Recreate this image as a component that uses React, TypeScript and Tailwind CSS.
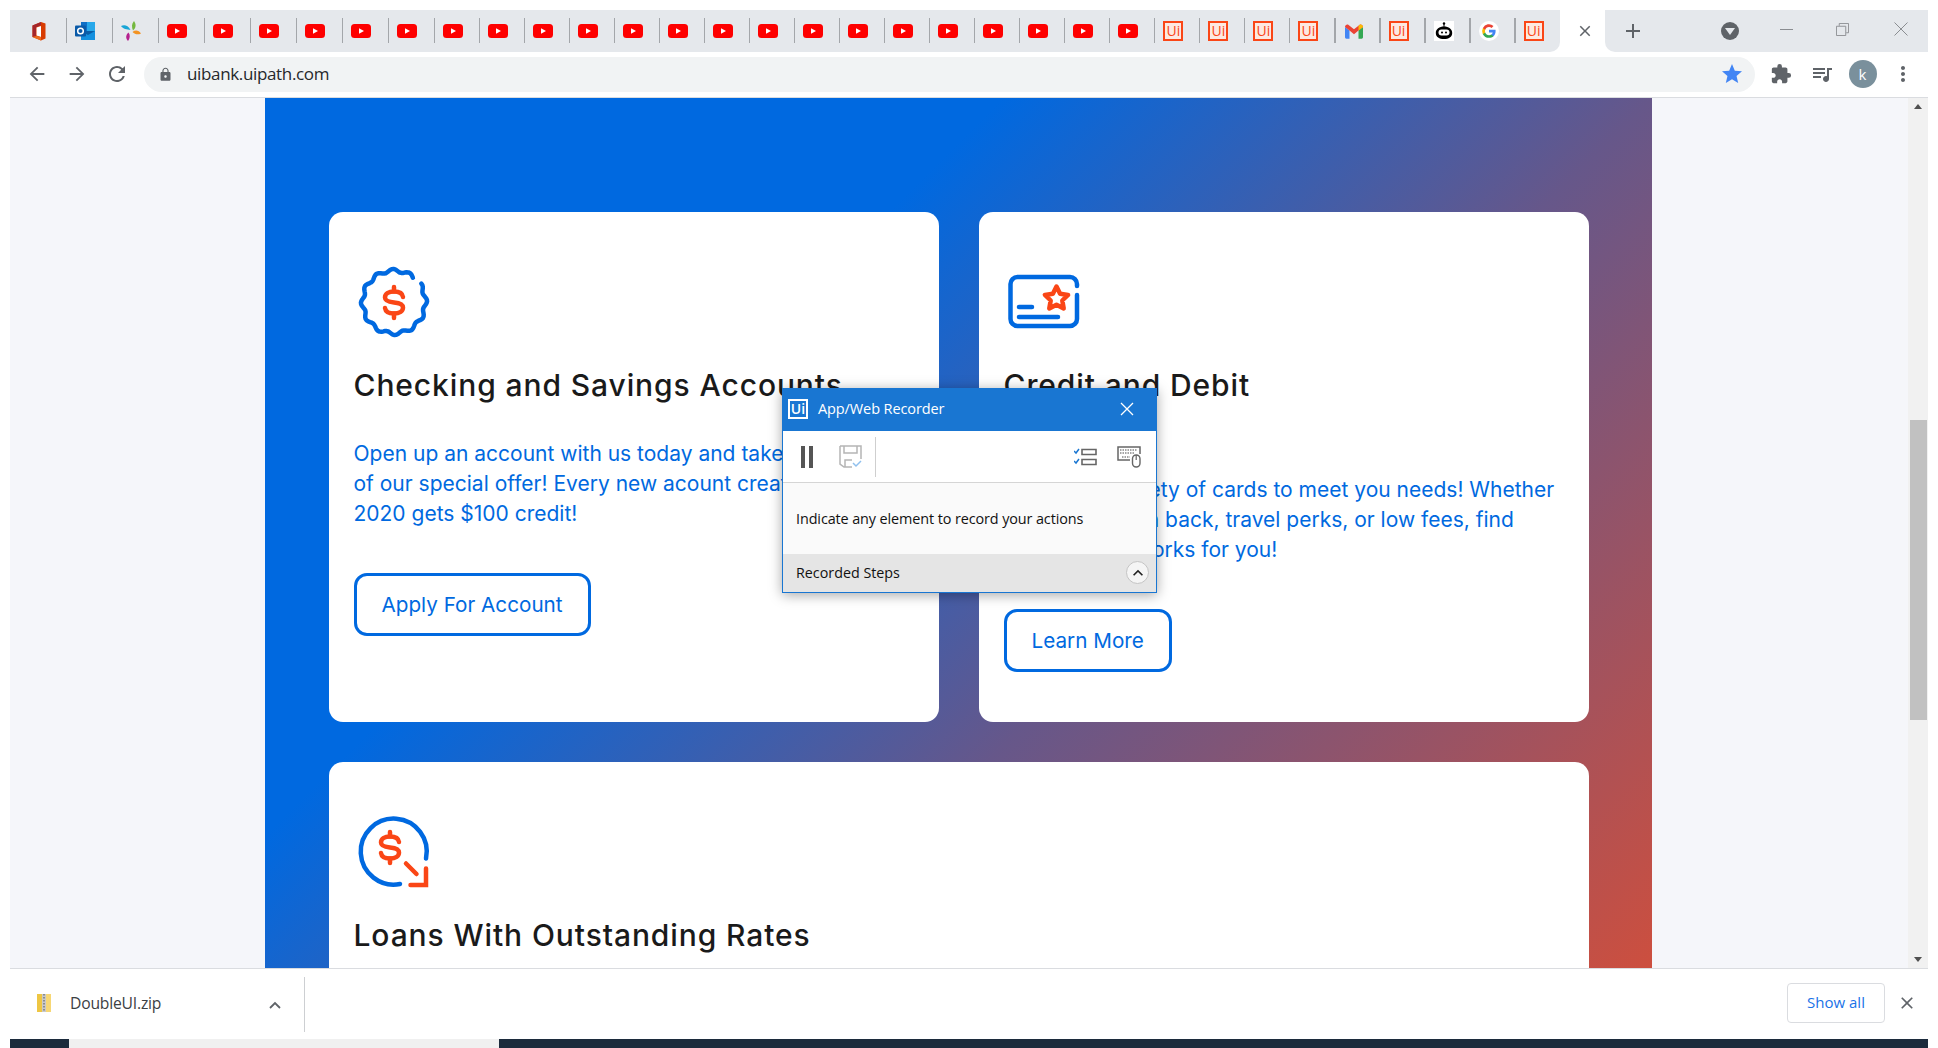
import React from "react";
import { MdArrowBack, MdArrowForward, MdRefresh, MdLock, MdStar, MdExtension, MdQueueMusic, MdMoreVert, MdClose, MdAdd, MdExpandLess } from "react-icons/md";

const BLUE = "#0069e0";
const OR = "#fa4616";

function Office() {
  return (
    <svg viewBox="0 0 20 20" className="w-5 h-5">
      <path d="M3.5 4.5 12 1l4.5 1.5v15L12 19.5 3.500 16V4.500Z" fill="#d83b01" />
      <path d="M3.500 4.500 12 1v3L7 6.500v8.500l-3.500 1z" fill="#a4262c" />
      <path d="M7.500 6.500 12 5v11l-4.500-1.500z" fill="#fff" />
      <path d="M12 16v3.500l-8.500-3.500L7.500 15z" fill="#eb6c1c" />
    </svg>
  );
}
function Outlook() {
  return (
    <svg viewBox="0 0 20 20" className="w-5 h-5">
      <rect x="6" y="1" width="14" height="9" fill="#0f6fc6" />
      <rect x="12" y="1" width="8" height="9" fill="#28a8ea" />
      <path d="M6 10h14v9H6z" fill="#0a5ea8" />
      <path d="M6 10l7 4 7-4v9H6z" fill="#1490df" />
      <rect x="0" y="4.500" width="11" height="11" rx="1" fill="#0a5aa8" />
      <circle cx="5.500" cy="10" r="2.800" fill="none" stroke="#fff" strokeWidth="1.500" />
    </svg>
  );
}
function Pin() {
  return (
    <svg viewBox="0 0 20 20" className="w-5 h-5">
      <path d="M0 5C3 3.500 7 4 9.500 9 6 8.500 2 8 0 5z" fill="#18a5d6" />
      <path d="M13 0c2 3 2.500 6.500-1 9.500C10.500 6 10.500 3 13 0z" fill="#74b83f" />
      <path d="M20 12.500c-3 1.500-6 1-8.500-1.500 3-2.500 6.500-1.500 8.500 1.500z" fill="#f39322" />
      <path d="M7 20C4.500 17.500 4.500 14 7.500 11.500c2 2.500 1.500 6-.5 8.500z" fill="#b5218e" />
    </svg>
  );
}
function Yt() {
  return (
    <svg viewBox="0 0 20 14" className="w-5 h-[14px]">
      <rect width="20" height="14" rx="3.500" fill="#fe0000" />
      <path d="M8 4.300 13 7l-5 2.700z" fill="#fff" />
    </svg>
  );
}
function Ui() {
  return (
    <div className="w-5 h-5 border-2 border-[#fa4616] bg-[#fde9e1] flex items-center justify-center text-[14px] leading-none text-[#fa4616] font-['Open_Sans',sans-serif]">
      Ui
    </div>
  );
}
function Gmail() {
  return (
    <svg viewBox="0 0 20 16" className="w-[18px] h-[15px]">
      <path d="M0 3v11.500C0 15.300.7 16 1.500 16H5V7z" fill="#4285f4" />
      <path d="M20 3v11.500c0 .8-.7 1.500-1.500 1.500H15V7z" fill="#34a853" />
      <path d="M0 3c0-2.500 2.500-3.500 4-2.300L10 5.500 16 .7C17.500-.5 20 .5 20 3l-5 4-5 4-5-4z" fill="#ea4335" />
      <path d="M15 7V2l1-1.300C17.500-.5 20 .5 20 3z" fill="#fbbc04" />
    </svg>
  );
}
function Robot() {
  return (
    <svg viewBox="0 0 20 20" className="w-5 h-5 bg-white">
      <circle cx="10" cy="2.500" r="1.200" fill="#000" />
      <rect x="9.500" y="3" width="1" height="3" fill="#000" />
      <path d="M1.800 12c0-4 3.600-6.500 8.200-6.500s8.200 2.500 8.200 6.500-3.600 6-8.200 6-8.200-2-8.200-6z" fill="#000" />
      <rect x="4.500" y="8.500" width="11" height="6" rx="3" fill="#fff" />
      <circle cx="8" cy="11.500" r="1" fill="#000" />
      <circle cx="12" cy="11.500" r="1" fill="#000" />
    </svg>
  );
}
function Google() {
  return (
    <svg viewBox="0 0 20 20" className="w-5 h-5">
      <circle cx="10" cy="10" r="10" fill="#fff" />
      <path d="M16.600 10.200c0-.5 0-.9-.1-1.400H10v2.600h3.700a3.200 3.200 0 0 1-1.400 2.100v1.700h2.200c1.300-1.200 2.100-2.900 2.100-5z" fill="#4285f4" />
      <path d="M10 16.800c1.800 0 3.400-.6 4.500-1.600l-2.200-1.700c-.6.400-1.400.7-2.300.7-1.800 0-3.300-1.200-3.800-2.800H3.900v1.800A6.800 6.800 0 0 0 10 16.800z" fill="#34a853" />
      <path d="M6.200 11.400a4 4 0 0 1 0-2.700V6.900H3.900a6.800 6.800 0 0 0 0 6.300z" fill="#fbbc05" />
      <path d="M10 5.900c1 0 1.900.3 2.600 1l1.900-1.900A6.800 6.800 0 0 0 3.900 6.900l2.300 1.800C6.700 7.100 8.200 5.900 10 5.900z" fill="#ea4335" />
    </svg>
  );
}

const tabs: React.ReactNode[] = [
  <Office />, <Outlook />, <Pin />,
  ...Array.from({ length: 22 }, () => <Yt />),
  <Ui />, <Ui />, <Ui />, <Ui />, <Gmail />, <Ui />, <Robot />, <Google />, <Ui />,
];

function Tab({ index, children }: { index: number; children: React.ReactNode }) {
  return (
    <div className={`${index < 9 ? "w-[46px]" : "w-[45.03px]"} h-full relative flex items-center pl-[9.500px] shrink-0`}>
      {index !== 0 && <div className="absolute left-0 top-[8px] bottom-[9px] w-[1.500px] bg-[#a3a6aa]" />}
      <div className="w-5 h-5 flex items-center justify-center">{children}</div>
    </div>
  );
}

function TabStrip() {
  return (
    <div className="h-[42px] flex shrink-0">
      <div className="w-[1550px] h-full bg-[#e5e8ec] rounded-br-[10px] flex pl-[9.700px] shrink-0">
        {tabs.map((t, i) => (
          <Tab key={i} index={i}>{t}</Tab>
        ))}
      </div>
      <div className="w-[45px] h-full bg-white rounded-t-[10px] flex items-center justify-center shrink-0">
        <MdClose className="w-[18px] h-[18px] text-[#5f6368] ml-[4px]" />
      </div>
      <div className="flex-1 h-full bg-[#e5e8ec] rounded-bl-[10px] flex items-center text-[#5f6368]">
        <MdAdd className="w-[24px] h-[24px] ml-[16px]" />
        <div className="w-[18px] h-[18px] rounded-full bg-[#5f6368] ml-[76px] flex items-center justify-center">
          <div className="w-0 h-0 border-l-[5px] border-r-[5px] border-t-[7px] border-l-transparent border-r-transparent border-t-[#e5e8ec] mt-[1px]" />
        </div>
        <div className="w-[13px] h-[1px] bg-[#8a8d91] ml-[41px] mb-[4px]" />
        <svg viewBox="0 0 14 14" className="w-[13px] h-[13px] ml-[43px] mb-[4px] text-[#8a8d91]">
          <path d="M3.500 3V.5h10v10H11M.5 3.500h10v10H.5z" fill="none" stroke="currentColor" />
        </svg>
        <svg viewBox="0 0 14 14" className="w-[14px] h-[14px] ml-[45px] mb-[4px]">
          <path d="M.5.5l13 13M13.500.5l-13 13" stroke="#8a8d91" strokeWidth="1" fill="none" />
        </svg>
      </div>
    </div>
  );
}

function Toolbar() {
  return (
    <div className="h-[46px] bg-white border-b border-[#dadce0] flex items-center shrink-0 text-[#5f6368] pb-[1px]">
      <MdArrowBack className="w-[22px] h-[22px] ml-[16px]" />
      <MdArrowForward className="w-[22px] h-[22px] ml-[18px]" />
      <MdRefresh className="w-[24px] h-[24px] ml-[17px]" />
      <div className="ml-[15px] w-[1611px] h-[35px] rounded-full bg-[#f1f3f4] flex items-center">
        <MdLock className="w-[15px] h-[15px] ml-[14px]" />
        <span className="ml-[14px] text-[17px] tracking-[-0.35px] text-[#25282b] font-['Open_Sans',sans-serif]">uibank.uipath.com</span>
        <MdStar className="w-[24px] h-[24px] ml-auto mr-[11px] text-[#4285f4]" />
      </div>
      <MdExtension className="w-[22px] h-[22px] ml-[15px]" />
      <MdQueueMusic className="w-[24px] h-[24px] ml-[17.500px]" />
      <div className="w-[28px] h-[28px] rounded-full bg-[#7a909c] text-white flex items-center justify-center text-[15px] ml-[15px] font-['Open_Sans',sans-serif]">k</div>
      <MdMoreVert className="w-[24px] h-[24px] ml-[14px]" />
    </div>
  );
}

function Dollar({ x, y }: { x: number; y: number }) {
  return (
    <g transform={`translate(${x} ${y})`} fill="none" stroke={OR} strokeWidth="4.500" strokeLinecap="round" strokeLinejoin="round">
      <path d="M9 -5.500C8.500 -9 5 -11 0 -11C-5.500 -11 -9 -8.500 -9 -5C-9 -1.500 -5 -.5 0 0C5 .5 9 1.500 9 5C9 8.500 5.500 11 0 11C-5 11 -8.500 9 -9 5.500" />
      <path d="M0 -11V-15.500M0 11V15.500" />
    </g>
  );
}

function badgePath() {
  const pts: string[] = [];
  for (let d = -34; d <= 309; d += 3) {
    const a = (d * Math.PI) / 180;
    const r = 31.5 + 1.600 * Math.cos(12 * a + 0.4);
    pts.push(`${(40 + r * Math.cos(a)).toFixed(2)} ${(40 + r * Math.sin(a)).toFixed(2)}`);
  }
  return "M" + pts.join("L");
}

function BadgeIcon() {
  return (
    <svg viewBox="0 0 80 80" className="w-20 h-20">
      <path d={badgePath()} fill="none" stroke={BLUE} strokeWidth="4.500" strokeLinecap="round" strokeLinejoin="round" />
      <Dollar x={40} y={40.500} />
    </svg>
  );
}
function CardIcon() {
  return (
    <svg viewBox="0 0 80 80" className="w-20 h-20">
      <path d="M73 33V57a7 7 0 0 1-7 7H13.500a7 7 0 0 1-7-7V22a7 7 0 0 1 7-7H66a7 7 0 0 1 7 7V24" fill="none" stroke={BLUE} strokeWidth="4.500" strokeLinecap="round" />
      <path d="M15 45H28M15 55H54" fill="none" stroke={BLUE} strokeWidth="4.500" strokeLinecap="round" />
      <path d="M52.500 24.500l3.600 7.300 8 1.100-5.800 5.600 1.400 8-7.200-3.800-7.200 3.800 1.400-8-5.800-5.600 8-1.100z" fill="none" stroke={OR} strokeWidth="4.500" strokeLinejoin="round" />
    </svg>
  );
}
function LoanIcon() {
  return (
    <svg viewBox="0 0 80 80" className="w-20 h-20">
      <path d="M72 46.500A33 33 0 1 0 46 72" fill="none" stroke={BLUE} strokeWidth="4.500" strokeLinecap="round" />
      <Dollar x={36} y={35.500} />
      <path d="M52 51.500 62.500 62M72 56.500V73H56.500" fill="none" stroke={OR} strokeWidth="4.500" strokeLinecap="round" />
    </svg>
  );
}

const titleCls = "text-[#1a1a1a] text-[30px] leading-[36px] tracking-[0.9px] font-medium font-['Inter',sans-serif] mt-[25px]";
const bodyCls = "text-[#0069e0] text-[21px] leading-[30px] font-['Inter',sans-serif] mt-[36px] whitespace-nowrap";
const btnCls = "h-[63px] px-[25px] border-[3px] border-[#0069e0] rounded-[13px] text-[#0069e0] text-[20.700px] font-['Inter',sans-serif] bg-white";

function Page() {
  return (
    <div className="ml-[255px] w-[1387px] pt-[114px] pl-[64px] pr-[63px] pb-[120px] bg-[linear-gradient(135deg,#0069e0_27.5%,#66578a_51.7%,#cc4f3f_84%,#e0582c_100%)]">
      <div className="grid grid-cols-2 gap-[40px]">
        <div className="bg-white rounded-[14px] h-[510px] pt-[50px] pl-[24.500px]">
          <BadgeIcon />
          <h2 className={titleCls}>Checking and Savings Accounts</h2>
          <p className={bodyCls}>Open up an account with us today and take advantage<br />of our special offer! Every new acount created in<br />2020 gets $100 credit!</p>
          <button className={`${btnCls} mt-[44px]`}>Apply For Account</button>
        </div>
        <div className="bg-white rounded-[14px] h-[510px] pt-[50px] pl-[24.500px]">
          <CardIcon />
          <h2 className={titleCls}>Credit and Debit<br />Cards</h2>
          <p className={bodyCls}>We offer a variety of cards to meet you needs! Whether<br />you prefer cash back, travel perks, or low fees, find<br />the card that works for you!</p>
          <button className={`${btnCls} mt-[44px]`}>Learn More</button>
        </div>
      </div>
      <div className="bg-white rounded-[14px] mt-[40px] h-[510px] pt-[50px] pl-[24.500px]">
        <LoanIcon />
        <h2 className={titleCls}>Loans With Outstanding Rates</h2>
      </div>
    </div>
  );
}

function Scrollbar() {
  return (
    <div className="w-[20px] h-full bg-[#f1f1f1] flex flex-col items-center shrink-0">
      <div className="h-[17px] w-full flex items-center justify-center">
        <div className="w-0 h-0 border-l-[4px] border-r-[4px] border-b-[5px] border-l-transparent border-r-transparent border-b-[#505050]" />
      </div>
      <div className="w-[17px] h-[300px] bg-[#c1c1c1] mt-[305px]" />
      <div className="flex-1" />
      <div className="h-[17px] w-full flex items-center justify-center">
        <div className="w-0 h-0 border-l-[4px] border-r-[4px] border-t-[5px] border-l-transparent border-r-transparent border-t-[#505050]" />
      </div>
    </div>
  );
}

function Recorder() {
  return (
    <div className="absolute left-[772px] top-[290px] w-[375px] h-[205px] border border-[#1976d2] bg-[#fafafa] shadow-[0_2px_12px_rgba(0,0,0,0.35)] flex flex-col font-['Open_Sans',sans-serif]">
      <div className="h-[42px] bg-[#1976d2] flex items-center text-white shrink-0 pb-[2px]">
        <div className="w-5 h-5 border-2 border-white ml-[5px] flex items-center justify-center text-[14px] leading-none font-semibold">Ui</div>
        <span className="ml-[10px] text-[14.500px] tracking-[-0.1px]">App/Web Recorder</span>
        <svg viewBox="0 0 14 14" className="w-[14px] h-[14px] ml-auto mr-[22px]">
          <path d="M1 1l12 12M13 1L1 13" stroke="#fff" strokeWidth="1.300" />
        </svg>
      </div>
      <div className="h-[52px] bg-white border-b border-[#d5d5d5] flex items-center shrink-0">
        <div className="w-[3.500px] h-[22px] bg-[#555] ml-[18px]" />
        <div className="w-[4px] h-[22px] bg-[#555] ml-[4.500px]" />
        <svg viewBox="0 0 23 23" className="w-[23px] h-[23px] ml-[26px]">
          <path d="M1 1H22V14M1 1V19L5 22H13" fill="none" stroke="#b5b5b5" strokeWidth="1.500" />
          <path d="M5 1V8H18V1M6 22V15H13" fill="none" stroke="#b5b5b5" strokeWidth="1.500" />
          <path d="M14 18l3 3 5-5" fill="none" stroke="#90c0ee" strokeWidth="1.500" />
        </svg>
        <div className="w-[1px] h-[40px] bg-[#cfcfcf] ml-[13px]" />
        <svg viewBox="0 0 23 18" className="w-[23px] h-[18px] ml-auto">
          <path d="M0 3l2 2 3-4M0 13l2 2 3-4" fill="none" stroke="#1976d2" strokeWidth="1.500" />
          <path d="M8 1.500h14v5H8zM8 11.500h14v5H8z" fill="none" stroke="#666" strokeWidth="1.600" />
        </svg>
        <svg viewBox="0 0 24 22" className="w-[24px] h-[22px] ml-[20px] mr-[15px]">
          <path d="M13 14H1V1H23V8" fill="none" stroke="#666" strokeWidth="1.500" />
          <path d="M3 4h17M3 7h15M5 11h8" fill="none" stroke="#888" strokeWidth="1.300" strokeDasharray="1.500 1" />
          <rect x="15.500" y="9" width="7.500" height="12" rx="3.700" fill="#fff" stroke="#666" strokeWidth="1.400" />
          <path d="M19.200 9v5" stroke="#666" strokeWidth="1.200" />
        </svg>
      </div>
      <div className="flex-1 flex items-center pl-[13px] text-[14.400px] tracking-[-0.1px] text-[#111]">
        Indicate any element to record your actions
      </div>
      <div className="h-[38px] bg-[#e5e5e5] flex items-center pl-[13px] pb-[1px] text-[14.300px] font-medium text-[#111] shrink-0">
        Recorded Steps
        <div className="w-[23px] h-[23px] rounded-full bg-[#f5f5f5] border border-[#c4c4c4] ml-auto mr-[7px] flex items-center justify-center">
          <MdExpandLess className="w-[20px] h-[20px] text-[#222]" />
        </div>
      </div>
    </div>
  );
}

function Shelf() {
  return (
    <div className="h-[71px] bg-white border-t border-[#dadce0] flex items-center shrink-0">
      <svg viewBox="0 0 14 20" className="w-[14px] h-[20px] ml-[27px] mb-[3px]">
        <rect x="0" y="1" width="14" height="18" fill="#f7d774" />
        <rect x="0" y="1" width="5" height="18" fill="#eec643" />
        <rect x="5" y="1" width="4" height="18" fill="#c9c9c9" />
        <path d="M7 1v18" stroke="#777" strokeWidth="1.500" strokeDasharray="1.500 1.500" />
      </svg>
      <span className="ml-[19px] text-[15.700px] tracking-[-0.2px] text-[#3c4043] font-['Open_Sans',sans-serif]">DoubleUI.zip</span>
      <svg viewBox="0 0 12 8" className="w-[12px] h-[8px] ml-[108px] mt-[1px]">
        <path d="M1 7l5-5 5 5" fill="none" stroke="#5f6368" strokeWidth="1.800" />
      </svg>
      <div className="w-[1px] h-[55px] bg-[#cdcfd2] ml-[23px]" />
      <div className="flex-1" />
      <div className="w-[98px] h-[40px] mb-[3px] rounded-[4px] border border-[#dadce0] flex items-center justify-center text-[15px] text-[#1a73e8] font-['Open_Sans',sans-serif]">Show all</div>
      <MdClose className="w-[20px] h-[20px] mb-[2px] text-[#5f6368] ml-[12px] mr-[11px]" />
    </div>
  );
}

export default function App() {
  return (
    <div className="w-[1938px] h-[1048px] bg-white pt-[10px] px-[10px] flex flex-col overflow-hidden">
      <TabStrip />
      <Toolbar />
      <div className="relative flex-1 min-h-0 flex overflow-hidden bg-[#f5f6fa]">
        <div className="flex-1 min-w-0 h-full overflow-hidden">
          <Page />
        </div>
        <Scrollbar />
        <Recorder />
      </div>
      <Shelf />
      <div className="h-[9px] bg-[#1c2b3c] flex shrink-0">
        <div className="w-[59px]" />
        <div className="w-[430px] bg-[#f0f0f0]" />
      </div>
    </div>
  );
}
